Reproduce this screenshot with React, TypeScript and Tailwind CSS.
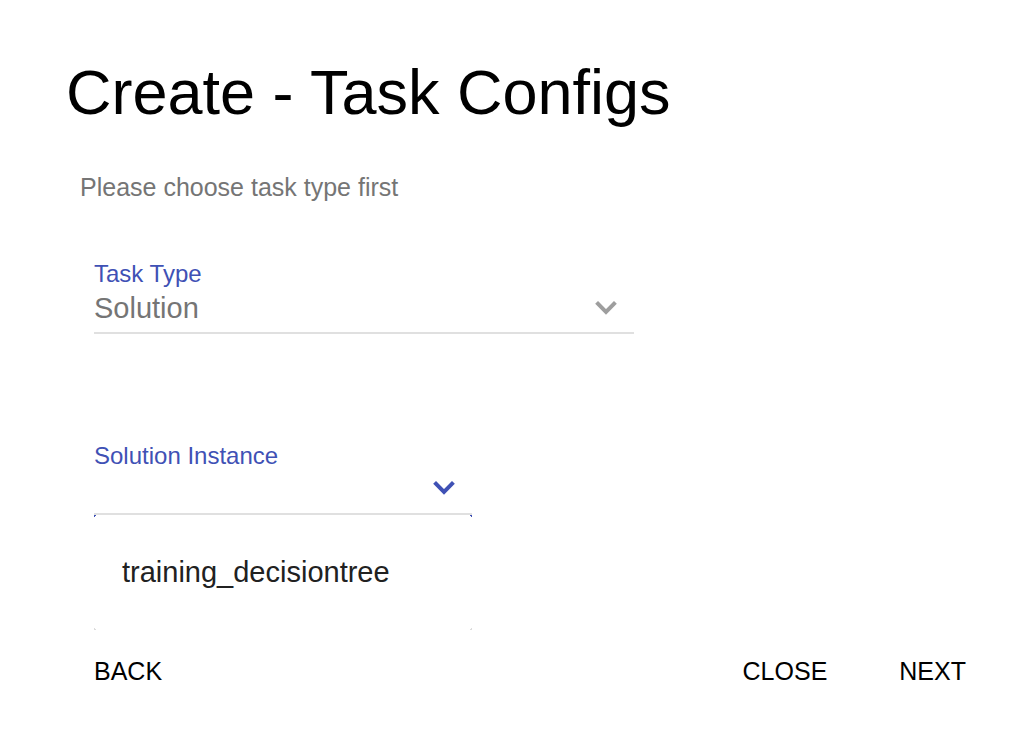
import { useState } from 'react';

const fieldLabel = 'block text-2xl leading-7 text-[#3f51b5]';
const actionButton = 'cursor-pointer text-[25px] leading-8 text-black uppercase';

function Chevron({ className }: { className: string }) {
  return (
    <svg aria-hidden="true" viewBox="0 0 22 14" className={className} fill="none" stroke="currentColor" strokeWidth="4">
      <path d="M1.6 1.4 L11 10.8 L20.4 1.4" />
    </svg>
  );
}

export default function App() {
  const [taskType, setTaskType] = useState('Solution');
  const [instance, setInstance] = useState('');

  return (
    <main className="min-h-screen bg-white px-[66px] pt-14 pb-12 font-['Liberation_Sans',Arial,sans-serif] text-black">
      <h1 className="text-[63px] leading-[72px]">Create - Task Configs</h1>

      <p className="mt-[43px] ml-[14px] text-[25px] leading-8 text-[#757575]">Please choose task type first</p>

      <form className="mt-[57px] ml-7" onSubmit={(e) => e.preventDefault()}>
        <div className="max-w-[540px]">
          <label htmlFor="task-type" className={fieldLabel}>Task Type</label>
          <div className="flex items-center border-b-2 border-[#e0e0e0] pt-0.5 pr-[17px] pb-1.5">
            <select
              id="task-type"
              value={taskType}
              onChange={(e) => setTaskType(e.target.value)}
              className="h-9 min-w-0 grow appearance-none bg-transparent text-[29px] leading-9 text-[#757575] outline-none"
            >
              <option>Solution</option>
            </select>
            <Chevron className="h-[14px] w-[22px] shrink-0 text-[#9e9e9e]" />
          </div>
        </div>

        <div className="mt-[108px] max-w-[378px]">
          <label htmlFor="instance" className={fieldLabel}>Solution Instance</label>
          <div className="flex items-center border-b-2 border-[#e0e0e0] pr-[17px] pb-[7px]">
            <input
              id="instance"
              value={instance}
              onChange={(e) => setInstance(e.target.value)}
              className="h-9 min-w-0 grow bg-transparent text-[29px] leading-9 text-[#757575] outline-none"
            />
            <Chevron className="h-[14px] w-[22px] shrink-0 text-[#3f51b5]" />
          </div>
          <div className="flex justify-between" aria-hidden="true">
            <span className="size-0.5 border-t border-l border-[#3f51b5]" />
            <span className="size-0.5 border-t border-r border-[#3f51b5]" />
          </div>
          <ul className="pt-[25px] pb-[26px]">
            <li>
              <button type="button" onClick={() => setInstance('training_decisiontree')} className="block w-full cursor-pointer px-7 py-3 text-left text-[29px] leading-9 text-[#212121]">
                training_decisiontree
              </button>
            </li>
          </ul>
          <div className="flex justify-between" aria-hidden="true">
            <span className="size-0.5 border-b border-l border-[#dcdcdc]" />
            <span className="size-0.5 border-r border-b border-[#dcdcdc]" />
          </div>
        </div>

        <div className="mt-[25px] flex items-center pr-0.5">
          <button type="button" className={actionButton}>Back</button>
          <div className="ml-auto flex gap-[72px]">
            <button type="button" className={actionButton}>Close</button>
            <button type="submit" className={actionButton}>Next</button>
          </div>
        </div>
      </form>
    </main>
  );
}
